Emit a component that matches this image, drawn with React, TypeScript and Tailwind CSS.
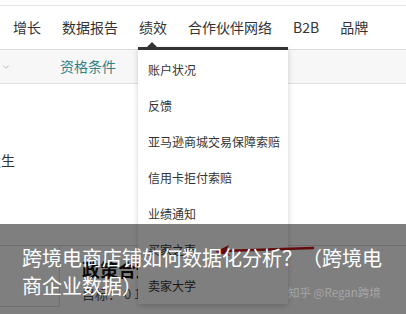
import { ChevronDown } from "lucide-react";

const navItems = ["增长", "数据报告", "绩效", "合作伙伴网络", "B2B", "品牌"];

const menuItems = [
  "账户状况",
  "反馈",
  "亚马逊商城交易保障索赔",
  "信用卡拒付索赔",
  "业绩通知",
  "买家之声",
  "卖家大学",
];

export default function App() {
  return (
    <div
      className="relative w-[406px] h-[314px] overflow-hidden bg-white text-[#333]"
      style={{ fontFamily: '"Noto Sans CJK SC", "Noto Sans", sans-serif' }}
    >
      {/* top strip */}
      <div className="h-[6px] border-b border-[#e6e6e6]" />

      {/* main nav */}
      <nav className="flex h-[44px] items-center gap-[21px] border-b border-[#dcdcdc] pl-[13px] text-[14px]">
        {navItems.map((item) => (
          <span key={item} className="whitespace-nowrap">
            {item}
          </span>
        ))}
      </nav>

      {/* sub bar */}
      <div className="flex h-[34px] items-center border-b border-[#e2e2e2] bg-[#f7f7f7] text-[14px]">
        <ChevronDown className="ml-[1px] h-[10px] w-[10px] text-[#999]" strokeWidth={1.5} />
        <span className="ml-[49px] text-[#2f8187]">资格条件</span>
      </div>

      {/* content */}
      <div className="h-[161px] overflow-hidden pt-[66px] text-[14px] leading-[20px]">
        <span className="ml-[-13px] whitespace-nowrap">发生</span>
      </div>

      <div className="flex border-t border-[#dcdcdc]">
        <div className="h-[61px] w-[60px] shrink-0 border-r border-b border-[#dcdcdc]" />
        <div className="pl-[22px] pt-[11px]">
          <div className="whitespace-nowrap text-[18px] font-bold leading-[24px] text-[#111]">政策合规</div>
          <div className="mt-[3px] whitespace-nowrap text-[13px] leading-[20px] text-[#555]">
            目标： 0 1%
          </div>
        </div>
      </div>

      {/* performance dropdown */}
      <div className="absolute left-[138px] top-[47px] w-[150px] border-t-[3px] border-[#333] bg-white pt-[2px] shadow-[0_2px_6px_rgba(0,0,0,0.18)]">
        <div className="absolute left-[9px] top-[-8px] h-0 w-0 border-x-[5px] border-b-[5px] border-x-transparent border-b-[#333]" />
        {menuItems.map((item) => (
          <div key={item} className="flex h-9 items-center whitespace-nowrap px-[10px] text-[12px] text-[#333]">
            {item}
          </div>
        ))}
      </div>

      {/* annotation arrow */}
      <svg className="absolute left-[205px] top-[240px]" width="115" height="20" viewBox="0 0 115 20">
        <path d="M108 8 L18 11" stroke="#c81818" strokeWidth="2.5" strokeLinecap="round" fill="none" />
        <path d="M10 12 L24 5 L21 11 L25 16 Z" fill="#c81818" />
      </svg>

      {/* title overlay */}
      <div className="absolute inset-x-0 bottom-0 h-[90px] bg-black/50 px-[22px] pt-[20px]">
        <p className="text-[20px] leading-[28px] text-white">跨境电商店铺如何数据化分析？（跨境电商企业数据）</p>
      </div>

      {/* watermark */}
      <div className="absolute left-[288px] top-[284px] whitespace-nowrap text-[11.5px] leading-[16px] text-white/30">
        知乎 @Regan跨境
      </div>
    </div>
  );
}
